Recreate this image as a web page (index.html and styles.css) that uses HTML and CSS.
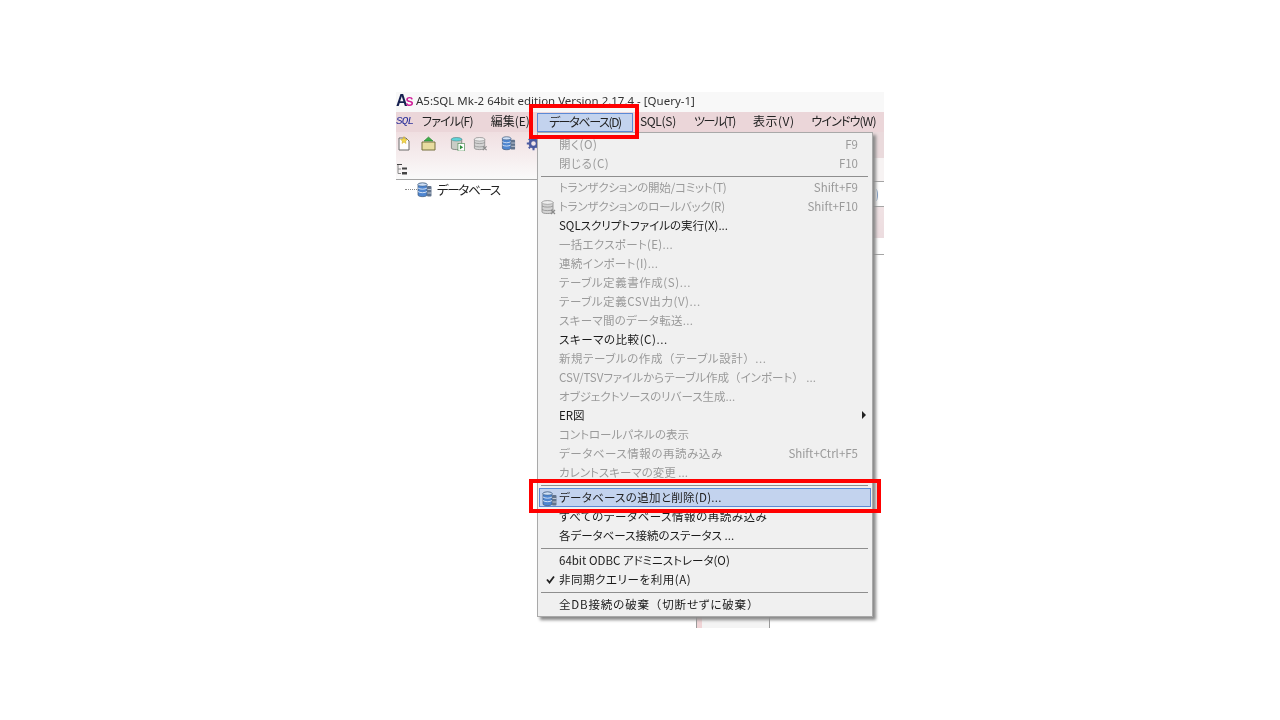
FILE: index.html
```html
<!DOCTYPE html>
<html lang="ja">

<head>
    <meta charset="UTF-8">
    <title>A5:SQL Mk-2</title>
    <link rel="stylesheet" href="styles.css">
</head>

<body>
    <svg class="defs" width="0" height="0">
        <symbol id="db" viewBox="0 0 15 16">
            <path d="M1 2.5C1 .6 10 .6 10 2.5V13C10 15.2 1 15.2 1 13Z" fill="currentColor" stroke="#3d5676" stroke-width=".7" />
            <path d="M1 6C3 7.6 8 7.6 10 6M1 9.5C3 11.1 8 11.1 10 9.5" fill="none" stroke="#dfe9f7" stroke-width=".9" />
            <ellipse cx="5.5" cy="2.5" rx="4.5" ry="1.6" fill="#cfe0f6" stroke="#3d5676" stroke-width=".5" />
            <rect x="10" y="4" width="4.5" height="10.5" rx="1" fill="#62748d" />
            <path d="M10.5 7.5H14.5M10.5 11H14.5" stroke="#d8dee8" stroke-width=".8" />
        </symbol>
    </svg>

    <div class="app">
        <div class="titlebar">
            <span class="logo">A<b>S</b></span>
            <span class="title">A5:SQL Mk-2 64bit edition Version 2.17.4 - [Query-1]</span>
        </div>

        <div class="menubar">
            <span class="sql-mark">SQL</span>
            <span class="top top-file">ファイル(F)</span>
            <span class="top top-edit">編集(E)</span>
            <span class="top top-active">データベース(D)</span>
            <span class="top top-sql">SQL(S)</span>
            <span class="top top-tool">ツール(T)</span>
            <span class="top top-view">表示(V)</span>
            <span class="top top-win">ウインドウ(W)</span>
        </div>

        <div class="workspace">
            <div class="left-pane">
                <div class="toolbar">
                    <svg class="tool" viewBox="0 0 15 15">
                        <path d="M2 2H9L12 5V14H2Z" fill="#fff" stroke="#6b6b6b" />
                        <path d="M7 .5L8 3 10.5 3.5 8.5 5 9 7.5 7 6 5 7.5 5.5 5 3.5 3.5 6 3Z" fill="#f4d84a" stroke="#c9a825" stroke-width=".5" />
                    </svg>
                    <svg class="tool tool-open" viewBox="0 0 15 15">
                        <path d="M1 6H14V14H1Z" fill="#e8dca0" stroke="#77703f" />
                        <path d="M7.5 1L12 5H3Z" fill="#3fae49" stroke="#2a7d33" stroke-width=".6" />
                    </svg>
                    <svg class="tool tool-run" viewBox="0 0 15 16">
                        <path d="M1 3.5C1 1.6 12 1.6 12 3.5V13C12 15 1 15 1 13Z" fill="#c9ccc6" stroke="#5d6660" stroke-width=".7" />
                        <ellipse cx="6.5" cy="3.5" rx="5.5" ry="1.9" fill="#5fd3d8" stroke="#4a7f80" stroke-width=".5" />
                        <rect x="8" y="8" width="7" height="8" fill="#fff" stroke="#4b8a52" stroke-width=".7" />
                        <path d="M10 9.5L13.5 12 10 14.5Z" fill="#2d8f3d" />
                    </svg>
                    <svg class="tool tool-gray" viewBox="0 0 15 16">
                        <path d="M1 3.5C1 1.6 12 1.6 12 3.5V13C12 15 1 15 1 13Z" fill="#d4d4d4" stroke="#858585" stroke-width=".8" />
                        <path d="M1 7C3 8.5 10 8.5 12 7M1 10.5C3 12 10 12 12 10.5" fill="none" stroke="#8f8f8f" stroke-width=".8" />
                        <ellipse cx="6.5" cy="3.5" rx="5.5" ry="1.9" fill="#eee" stroke="#858585" stroke-width=".6" />
                        <path d="M10 11L14 15M14 11L10 15" stroke="#8a8a8a" stroke-width="1.2" />
                    </svg>
                    <svg class="tool tool-blue db-blue"><use href="#db" /></svg>
                    <svg class="tool tool-gear" viewBox="0 0 15 15">
                        <circle cx="7.5" cy="7.5" r="3.6" fill="none" stroke="#4a5aa0" stroke-width="2.6" />
                        <path d="M7.5 .8V3M7.5 12V14.2M.8 7.5H3M12 7.5H14.2M2.8 2.8L4.4 4.4M10.6 10.6L12.2 12.2M12.2 2.8L10.6 4.4M4.4 10.6L2.8 12.2" stroke="#4a5aa0" stroke-width="2" />
                    </svg>
                </div>
                <div class="subbar">
                    <svg class="tree-tool" viewBox="0 0 11 11">
                        <path d="M0 .5H5" stroke="#444" />
                        <path d="M1 1V9.5H4M1 5H4" stroke="#888" fill="none" />
                        <path d="M5 3.5H10V5.5H5ZM5 8H10V10.5H5Z" fill="#444" />
                    </svg>
                </div>
                <div class="tree">
                    <span class="tree-dots"></span>
                    <svg class="tree-icon db-blue"><use href="#db" /></svg>
                    <span class="tree-label">データベース</span>
                </div>
            </div>

            <div class="editor">
                <div class="band-pink"></div>
                <div class="band-light"></div>
                <div class="band-white"><span class="arc"></span></div>
                <div class="band-pink2"></div>
                <div class="band-plain"></div>
                <div class="gap"></div>
                <div class="stub"></div>
            </div>
        </div>

        <div class="menu">
            <div class="item off"><span class="wide-2">開く(O)</span><span>F9</span></div>
            <div class="item off"><span class="wide-2">閉じる(C)</span><span>F10</span></div>
            <div class="sep sep-first"></div>
            <div class="item off"><span class="tight">トランザクションの開始/コミット(T)</span><span>Shift+F9</span></div>
            <div class="item off">
                <svg class="item-icon" viewBox="0 0 15 16">
                    <path d="M1 3.5C1 1.6 12 1.6 12 3.5V13C12 15 1 15 1 13Z" fill="#d4d4d4" stroke="#858585" stroke-width=".8" />
                    <path d="M1 7C3 8.5 10 8.5 12 7M1 10.5C3 12 10 12 12 10.5" fill="none" stroke="#8f8f8f" stroke-width=".8" />
                    <ellipse cx="6.5" cy="3.5" rx="5.5" ry="1.9" fill="#eee" stroke="#858585" stroke-width=".6" />
                    <path d="M10 11L14 15M14 11L10 15" stroke="#8a8a8a" stroke-width="1.2" />
                </svg>
                <span class="tight">トランザクションのロールバック(R)</span><span>Shift+F10</span>
            </div>
            <div class="item"><span>SQLスクリプトファイルの実行(X)...</span></div>
            <div class="item off"><span class="wide-1">一括エクスポート(E)...</span></div>
            <div class="item off"><span class="wide-1">連続インポート(I)...</span></div>
            <div class="item off"><span class="wide-2">テーブル定義書作成(S)...</span></div>
            <div class="item off"><span class="wide-2">テーブル定義CSV出力(V)...</span></div>
            <div class="item off"><span class="wide-1">スキーマ間のデータ転送...</span></div>
            <div class="item"><span class="wide-2">スキーマの比較(C)...</span></div>
            <div class="item off"><span class="wide-2">新規テーブルの作成<span class="fw">（</span>テーブル設計<span class="fw">）</span>...</span></div>
            <div class="item off"><span>CSV/TSVファイルからテーブル作成<span class="fw">（</span>インポート<span class="fw">）</span> ...</span></div>
            <div class="item off"><span>オブジェクトソースのリバース生成...</span></div>
            <div class="item"><span>ER図</span><i class="arrow"></i></div>
            <div class="item off"><span>コントロールパネルの表示</span></div>
            <div class="item off"><span class="wide-2">データベース情報の再読み込み</span><span>Shift+Ctrl+F5</span></div>
            <div class="item off"><span>カレントスキーマの変更 ...</span></div>
            <div class="sep"></div>
            <div class="item item-hot">
                <svg class="item-icon db-blue"><use href="#db" /></svg>
                <span class="wide-1">データベースの追加と削除(D)...</span>
            </div>
            <div class="item"><span class="wide-2">すべてのデータベース情報の再読み込み</span></div>
            <div class="item"><span>各データベース接続のステータス ...</span></div>
            <div class="sep"></div>
            <div class="item"><span>64bit ODBC アドミニストレータ(O)</span></div>
            <div class="item">
                <svg class="check" viewBox="0 0 9 9">
                    <path d="M1 4.5L3.5 7.5 8 1.5" fill="none" stroke="#222" stroke-width="1.8" />
                </svg>
                <span class="wide-2">非同期クエリーを利用(A)</span>
            </div>
            <div class="sep"></div>
            <div class="item"><span class="wide-3">全DB接続の破棄<span class="fw">（</span>切断せずに破棄<span class="fw">）</span></span></div>
        </div>

        <div class="redbox redbox-top"></div>
        <div class="redbox redbox-item"></div>
    </div>
</body>

</html>
```

FILE: styles.css
```css
* {
    box-sizing: border-box;
}

html,
body {
    margin: 0;
    height: 720px;
    overflow: hidden;
    background: #fff;
}

body {
    padding: 92px 0 0 396px;
    font-family: "Noto Sans CJK JP", "Noto Sans", sans-serif;
    font-size: 12px;
    font-feature-settings: "palt";
    color: #222;
}

.defs {
    position: absolute;
}

.app {
    position: relative;
    width: 488px;
    height: 536px;
    display: flex;
    flex-direction: column;
}

/* the reference is a scaled capture, everything but the callouts is a bit soft */
.titlebar,
.menubar,
.workspace,
.menu {
    filter: blur(.3px);
}

/* title and menu */
.titlebar {
    height: 20px;
    padding-bottom: 3px;
    display: flex;
    align-items: center;
    background: #f8f8f8;
}

.logo {
    width: 20px;
    font-family: "Liberation Sans", sans-serif;
    font-size: 16px;
    font-weight: bold;
    letter-spacing: -2px;
    color: #16204f;
}

.logo b {
    color: #d0209a;
    font-size: 12px;
}

.title {
    font-family: "Noto Sans", sans-serif;
    font-size: 11.5px;
    color: #333;
    white-space: nowrap;
}

.menubar {
    height: 20px;
    padding-bottom: 3px;
    display: flex;
    align-items: center;
    background: #ebd6d9;
}

.sql-mark {
    flex: none;
    width: 26px;
    font-family: "Liberation Mono", monospace;
    font-size: 11px;
    font-style: italic;
    color: #2a2f9a;
    letter-spacing: -.8px;
}

.top {
    flex: none;
    margin-right: 18px;
    white-space: nowrap;
}

.top-file {
    letter-spacing: -.8px;
}

.top-edit {
    margin-right: 7px;
}

.top-active {
    width: 96px;
    height: 19px;
    margin-top: 3px;
    margin-right: 7px;
    line-height: 15px;
    text-align: center;
    letter-spacing: -1.4px;
    background: #c3d3ee;
    border: 1px solid #5b8ad6;
}

.top-sql {
    letter-spacing: -.3px;
}

.top-tool {
    letter-spacing: -1.4px;
}

.top-view {
    margin-right: 17px;
    letter-spacing: .5px;
}

.top-win {
    letter-spacing: -.85px;
}

/* window behind the menu */
.workspace {
    flex: 1;
    display: flex;
}

.left-pane {
    width: 300px;
    background: #fff;
}

.toolbar {
    height: 26px;
    padding: 0 0 3px 1px;
    display: flex;
    align-items: center;
    background: linear-gradient(#f0dfe1, #f6eeef);
}

.tool {
    width: 15px;
    height: 15px;
    flex: none;
}

.tool-open {
    margin-left: 9px;
}

.tool-run {
    margin-left: 14px;
}

.tool-gray {
    margin-left: 8px;
}

.tool-blue {
    margin-left: 13px;
}

.tool-gear {
    margin-left: 10px;
}

.db-blue {
    color: #4f86d0;
}

.subbar {
    height: 22px;
    padding: 6px 0 0 1px;
    border-bottom: 1px solid #a5a5a5;
    background: linear-gradient(#f6eeef, #fafafa);
}

.tree-tool {
    display: block;
    width: 11px;
    height: 11px;
}

.tree {
    height: 19px;
    padding-left: 9px;
    display: flex;
    align-items: center;
}

.tree-dots {
    width: 12px;
    border-top: 1px dotted #888;
}

.tree-icon {
    width: 15px;
    height: 16px;
    margin-right: 5px;
}

.tree-label {
    font-size: 12.5px;
    letter-spacing: -1.3px;
}

.editor {
    flex: 1;
    display: flex;
    flex-direction: column;
    background: #fff;
}

.band-pink {
    height: 26px;
    background: #eadadc;
}

.band-light {
    height: 24px;
    background: #f7f3f3;
    border-bottom: 1px solid #a5a5a5;
}

.band-white {
    height: 25px;
    position: relative;
    border-bottom: 1px solid #a5a5a5;
}

.arc {
    position: absolute;
    left: 178px;
    top: 7px;
    width: 4px;
    height: 12px;
    border-right: 1px solid #7f9fc8;
    border-radius: 50%;
}

.band-pink2 {
    height: 31px;
    background: linear-gradient(#f0e2e4, #ecdcdf);
}

.band-plain {
    height: 17px;
    border-bottom: 1px solid #a5a5a5;
}

.gap {
    flex: 1;
}

.stub {
    width: 74px;
    height: 11px;
    background: linear-gradient(to right, #f0d4d6 5px, #f4f4f4 5px);
    border-left: 1px solid #9a9a9a;
    border-right: 1px solid #9a9a9a;
}

/* dropdown */
.menu {
    position: absolute;
    left: 141px;
    top: 40px;
    width: 336px;
    padding: 2px 0;
    font-size: 11.5px;
    background: #f0f0f0;
    border: 1px solid #a9a9a9;
    box-shadow: 3px 3px 3px #8a8a8a;
}

.item {
    position: relative;
    height: 19px;
    margin: 0 1px;
    padding: 0 13px 1px 20px;
    display: flex;
    align-items: center;
    justify-content: space-between;
    white-space: nowrap;
    color: #1a1a1a;
}

.off {
    color: #9a9a9a;
}

.fw {
    font-feature-settings: normal;
}

/* Meiryo UI runs wider than Noto on kanji, narrower on kana */
.wide-1 {
    letter-spacing: .3px;
}

.wide-2 {
    letter-spacing: .55px;
}

.wide-3 {
    letter-spacing: .85px;
}

.tight {
    letter-spacing: -.2px;
}

.item-hot {
    background: #c3d3ee;
    border: 1px solid #5b8ad6;
    padding-left: 19px;
    color: #222;
}

.item-icon {
    position: absolute;
    left: 2px;
    top: 2px;
    width: 15px;
    height: 16px;
}

.check {
    position: absolute;
    left: 7px;
    top: 5px;
    width: 9px;
    height: 9px;
}

.arrow {
    width: 0;
    height: 0;
    margin-right: -8px;
    border-left: 4px solid #222;
    border-top: 4px solid transparent;
    border-bottom: 4px solid transparent;
}

.sep {
    height: 6px;
    margin: 0 4px 0 3px;
    padding-top: 3px;
}

.sep::before {
    content: "";
    display: block;
    border-top: 1px solid #8e8e8e;
}

.sep-first {
    height: 5px;
}

/* callouts */
.redbox {
    position: absolute;
    border: 4px solid #f00;
}

.redbox-top {
    left: 133px;
    top: 12px;
    width: 110px;
    height: 35px;
}

.redbox-item {
    left: 133px;
    top: 387px;
    width: 352px;
    height: 34px;
}
```
